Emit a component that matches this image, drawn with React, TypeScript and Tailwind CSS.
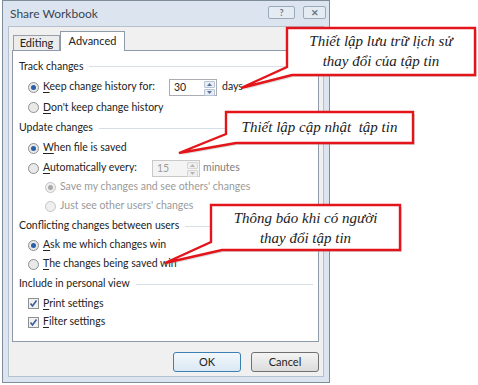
import React from "react";

const ui = { fontFamily: 'Lato, "Noto Sans", sans-serif' };
const serif = { fontFamily: '"Liberation Serif", "Times New Roman", serif' };

const Radio = ({ on, disabled }: { on?: boolean; disabled?: boolean }) => (
  <span
    className={`w-[11px] h-[11px] rounded-full border flex items-center justify-center shrink-0 ${
      disabled ? "border-[#c4c4c4] bg-[#efefef]" : "border-[#8e8f8f] bg-[#e9e9e9]"
    }`}
  >
    {on && (
      <span className={`w-[5px] h-[5px] rounded-full ${disabled ? "bg-[#a9a9a9]" : "bg-[#2a5ea6]"}`} />
    )}
  </span>
);

const Check = () => (
  <span className="w-[11px] h-[11px] border border-[#8e8f8f] bg-[#f1f1f1] flex items-center justify-center shrink-0">
    <svg width="9" height="9" viewBox="0 0 9 9">
      <path d="M1.5 4.5 L3.5 7 L7.5 1.5" fill="none" stroke="#3b5b9a" strokeWidth="1.6" />
    </svg>
  </span>
);

const Mn = ({ k, rest }: { k: string; rest: string }) => (
  <span className="whitespace-nowrap">
    <span className="underline underline-offset-2">{k}</span>
    {rest}
  </span>
);

const Spin = ({ value, disabled }: { value: string; disabled?: boolean }) => (
  <div
    className={`flex h-[17px] w-[48px] shrink-0 border ${
      disabled ? "border-[#c9c9c9] bg-[#f4f4f4] text-[#9c9c9c]" : "border-[#abadb3] bg-white text-[#222]"
    }`}
  >
    <div className="flex-1 pl-[4px] flex items-center leading-none">{value}</div>
    <div className="w-[13px] flex flex-col gap-px p-px">
      {["M1 4 L3.5 1 L6 4 Z", "M1 1 L3.5 4 L6 1 Z"].map((d) => (
        <div
          key={d}
          className={`flex-1 flex items-center justify-center rounded-[1px] border ${
            disabled ? "border-[#d6d6d6] bg-[#efefef]" : "border-[#b7c4d6] bg-[#e6edf6]"
          }`}
        >
          <svg width="7" height="5" viewBox="0 0 7 5">
            <path d={d} fill={disabled ? "#b5b5b5" : "#5b7390"} />
          </svg>
        </div>
      ))}
    </div>
  </div>
);

const Group = ({ label, h }: { label: string; h: string }) => (
  <div className={`flex items-center gap-[6px] ${h}`}>
    <span className="whitespace-nowrap">{label}</span>
    <span className="flex-1 h-px bg-[#d8dee5]" />
  </div>
);

export default function App() {
  return (
    <div className="relative w-[478px] h-[385px] bg-white overflow-hidden text-[10.5px] text-[#222]" style={ui}>
      <div className="ml-[2px] w-[328px] h-[383px] border border-[#7f8c99] bg-[#dce5ef] flex flex-col">
        <div className="h-[25px] flex items-center pl-[7px] pr-[3px]">
          <span className="flex-1 text-[12px] text-[#3a4654]">Share Workbook</span>
          <div className="flex gap-[8px] -mt-[2px]">
            <div className="w-[27px] h-[13px] rounded-[2px] border border-[#9aaabb] bg-[#e4ebf2] flex items-center justify-center text-[9px] text-[#6b7886] leading-none font-bold">
              ?
            </div>
            <div className="w-[23px] h-[13px] rounded-[2px] border border-[#9aaabb] bg-[#e4ebf2] flex items-center justify-center text-[9px] text-[#6b7886] leading-none font-bold">
              ✕
            </div>
          </div>
        </div>

        <div className="mx-[5px] mb-[5px] flex-1 bg-[#f0f0f0] border border-[#b4c0cd] flex flex-col pl-[3px] pr-[4px] pt-[4px]">
          <div className="flex items-end h-[19px] pl-px text-[11px]">
            <div className="w-[47px] h-[15px] border border-b-0 border-[#999fa8] bg-[#ececec] flex items-center justify-center">
              Editing
            </div>
            <div className="relative z-10 w-[65px] h-[20px] -mb-px border border-b-0 border-[#8e9aa8] bg-white flex items-center justify-center">
              Advanced
            </div>
          </div>

          <div className="h-[292px] border border-[#8e9aa8] bg-white pt-[5px] pl-[6px] pr-[5px] flex flex-col">
            <Group label="Track changes" h="h-[21px]" />
            <div className="flex items-center h-[20px] ml-[9px] gap-[4px]">
              <Radio on />
              <span className="w-[122px] shrink-0">
                <Mn k="K" rest="eep change history for:" />
              </span>
              <Spin value="30" />
              <span className="ml-px">days</span>
            </div>
            <div className="flex items-center h-[21px] ml-[9px] gap-[4px]">
              <Radio />
              <Mn k="D" rest="on't keep change history" />
            </div>

            <Group label="Update changes" h="h-[20px]" />
            <div className="flex items-center h-[20px] ml-[9px] gap-[4px]">
              <Radio on />
              <Mn k="W" rest="hen file is saved" />
            </div>
            <div className="flex items-center h-[20px] ml-[9px] gap-[4px]">
              <Radio />
              <span className="w-[105px] shrink-0">
                <Mn k="A" rest="utomatically every:" />
              </span>
              <Spin value="15" disabled />
              <span className="-ml-px text-[#7d7d7d]">minutes</span>
            </div>
            <div className="flex items-center h-[18px] ml-[26px] gap-[4px] text-[#9a9a9a]">
              <Radio on disabled />
              <span className="whitespace-nowrap">Save my changes and see others' changes</span>
            </div>
            <div className="flex items-center h-[20px] ml-[26px] gap-[4px] text-[#9a9a9a]">
              <Radio disabled />
              <span className="whitespace-nowrap">Just see other users' changes</span>
            </div>

            <Group label="Conflicting changes between users" h="h-[20px]" />
            <div className="flex items-center h-[18px] ml-[9px] gap-[4px]">
              <Radio on />
              <Mn k="A" rest="sk me which changes win" />
            </div>
            <div className="flex items-center h-[20px] ml-[9px] gap-[4px]">
              <Radio />
              <Mn k="T" rest="he changes being saved win" />
            </div>

            <Group label="Include in personal view" h="h-[20px]" />
            <div className="flex items-center h-[19px] ml-[9px] gap-[4px]">
              <Check />
              <Mn k="P" rest="rint settings" />
            </div>
            <div className="flex items-center h-[18px] ml-[9px] gap-[4px]">
              <Check />
              <Mn k="F" rest="ilter settings" />
            </div>
          </div>

          <div className="flex justify-end gap-[10px] mt-[10px]">
            <button className="w-[68px] h-[20px] rounded-[3px] border border-[#3c7fb1] bg-gradient-to-b from-[#f2f8fc] to-[#dbe8f3] text-[#222] text-[11px]">
              OK
            </button>
            <button className="w-[68px] h-[20px] rounded-[3px] border border-[#707070] bg-gradient-to-b from-[#f4f4f4] to-[#dcdcdc] text-[#222] text-[11px]">
              Cancel
            </button>
          </div>
        </div>
      </div>

      <svg className="absolute inset-0 pointer-events-none" width="478" height="385" viewBox="0 0 478 385">
        <g fill="#9a9a9a" opacity="0.35" transform="translate(2 2)">
          <path d="M287 28 H475 V75 H292 L241 88 L287 67 Z" />
          <path d="M226 112 H413 V143 H236 L179 153 L226 134 Z" />
          <path d="M211 205 H400 V250 H222 L165 263 L211 242 Z" />
        </g>
        <g fill="white" stroke="#e3151a" strokeWidth="2.4" strokeLinejoin="miter">
          <path d="M287 28 H475 V75 H292 L241 88 L287 67 Z" />
          <path d="M226 112 H413 V143 H236 L179 153 L226 134 Z" />
          <path d="M211 205 H400 V250 H222 L165 263 L211 242 Z" />
        </g>
      </svg>

      <div
        className="absolute left-[288px] top-[31px] w-[186px] text-center italic text-[15px] leading-[20px] text-[#222]"
        style={serif}
      >
        Thiết lập lưu trữ lịch sử
        <br />
        thay đổi của tập tin
      </div>
      <div
        className="absolute left-[227px] top-[117px] w-[185px] text-center italic text-[15px] leading-[20px] text-[#222]"
        style={serif}
      >
        Thiết lập cập nhật&nbsp; tập tin
      </div>
      <div
        className="absolute left-[212px] top-[208px] w-[187px] text-center italic text-[15px] leading-[20px] text-[#222]"
        style={serif}
      >
        Thông báo khi có người
        <br />
        thay đổi tập tin
      </div>
    </div>
  );
}
